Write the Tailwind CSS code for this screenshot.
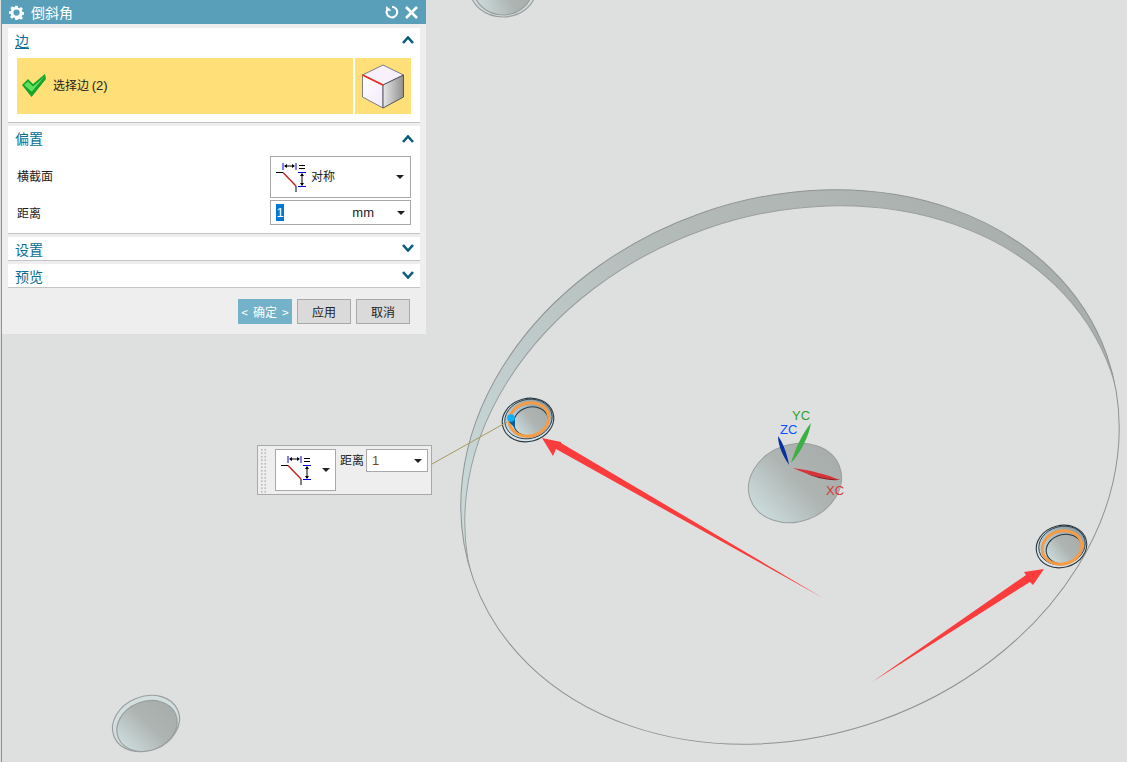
<!DOCTYPE html>
<html lang="zh">
<head>
    <meta charset="UTF-8">
    <title>倒斜角</title>
    <script src="https://cdn.jsdelivr.net/npm/@tailwindcss/browser@4"></script>
</head>
<body class="m-0 overflow-hidden">
<div class="relative w-[1127px] h-[762px] bg-[#dee0df] overflow-hidden font-['Noto_Sans_CJK_SC','Liberation_Sans',sans-serif]">

    <!-- graphics window -->
    <svg class="absolute inset-0" width="1127" height="762" viewBox="0 0 1127 762">
        <defs>
            <linearGradient id="wall" gradientUnits="userSpaceOnUse" x1="461" y1="500" x2="1118" y2="300">
                <stop offset="0" stop-color="#cbdcdc"/>
                <stop offset="0.5" stop-color="#b4bcba"/>
                <stop offset="1" stop-color="#a8aeac"/>
            </linearGradient>
            <linearGradient id="hole" x1="0" y1="0.7" x2="1" y2="0.35">
                <stop offset="0" stop-color="#cddddd"/>
                <stop offset="0.55" stop-color="#adb4b2"/>
                <stop offset="1" stop-color="#a8adab"/>
            </linearGradient>
            <linearGradient id="ring" x1="0" y1="0.9" x2="1" y2="0.1">
                <stop offset="0" stop-color="#c9e2ee"/>
                <stop offset="0.6" stop-color="#a9bfca"/>
                <stop offset="1" stop-color="#7f8f98"/>
            </linearGradient>
            <clipPath id="outerClip">
                <ellipse cx="790" cy="467" rx="336" ry="269" transform="rotate(-19.5 790 467)"/>
            </clipPath>
        </defs>

        <!-- big cutout -->
        <ellipse cx="790" cy="467" rx="336" ry="269" transform="rotate(-19.5 790 467)" fill="url(#wall)"/>
        <g clip-path="url(#outerClip)">
            <ellipse cx="794" cy="483" rx="336" ry="269" transform="rotate(-19.5 794 483)" fill="#dee0df" stroke="#9a9e9e" stroke-width="1"/>
        </g>
        <ellipse cx="790" cy="467" rx="336" ry="269" transform="rotate(-19.5 790 467)" fill="none" stroke="#8f9393" stroke-width="1"/>

        <!-- top hole -->
        <ellipse cx="503" cy="-11" rx="33" ry="28" fill="#d2dfde" stroke="#9a9e9e" stroke-width="1.2"/>
        <ellipse cx="503" cy="-13" rx="30" ry="28" fill="url(#hole)" stroke="#9a9e9e" stroke-width="1.2"/>

        <!-- bottom left hole -->
        <ellipse cx="146" cy="723.5" rx="34.5" ry="27" transform="rotate(-22 146 723.5)" fill="#d2dfde" stroke="#9a9e9e" stroke-width="1.2"/>
        <ellipse cx="147" cy="726" rx="31" ry="24.5" transform="rotate(-22 147 726)" fill="url(#hole)" stroke="#9a9e9e" stroke-width="1.2"/>

        <!-- centre hole -->
        <ellipse cx="795" cy="483" rx="47.5" ry="38.5" transform="rotate(-20 795 483)" fill="url(#hole)" stroke="#9a9e9e" stroke-width="1"/>

        <!-- selected hole, left -->
        <ellipse cx="528" cy="420" rx="26" ry="21.5" transform="rotate(-15 528 420)" fill="#d9e5ea" stroke="#2d3a42" stroke-width="1.1"/>
        <ellipse cx="528.5" cy="419" rx="24" ry="19.5" transform="rotate(-15 528.5 419)" fill="url(#ring)" stroke="#2d3a42" stroke-width="0.9"/>
        <ellipse cx="531" cy="421.5" rx="17.5" ry="14.5" transform="rotate(-15 531 421.5)" fill="url(#hole)" stroke="#2d3a42" stroke-width="1.1"/>
        <ellipse cx="529" cy="419.5" rx="20" ry="16.5" transform="rotate(-15 529 419.5)" fill="none" stroke="#f59c45" stroke-width="3"/>

        <!-- selected hole, right -->
        <ellipse cx="1061.5" cy="546.5" rx="25.5" ry="21" transform="rotate(-15 1061.5 546.5)" fill="#d9e5ea" stroke="#2d3a42" stroke-width="1.1"/>
        <ellipse cx="1062" cy="545.5" rx="23.5" ry="19" transform="rotate(-15 1062 545.5)" fill="url(#ring)" stroke="#2d3a42" stroke-width="0.9"/>
        <ellipse cx="1064" cy="549" rx="18" ry="14.5" transform="rotate(-15 1064 549)" fill="url(#hole)" stroke="#2d3a42" stroke-width="1.1"/>
        <ellipse cx="1062" cy="547.5" rx="20" ry="16.5" transform="rotate(-15 1062 547.5)" fill="none" stroke="#f59c45" stroke-width="3"/>

        <!-- leader + handle -->
        <line x1="432" y1="464" x2="507" y2="422" stroke="#a89a5a" stroke-width="1"/>
        <polygon points="509,422 515,418 515,428" fill="#0b5e96"/>
        <circle cx="511" cy="418" r="3.8" fill="#0fb0f5"/>

        <!-- csys -->
        <path d="M778 436 C783 443 787 453 789 465 C784 457 778 447 778 436Z" fill="#0a2f9e"/>
        <path d="M811 423 C809 436 801 452 791 463 C795 449 802 434 811 423Z" fill="#3cb043"/>
        <path d="M793 468 C810 470 828 475 840 480 C826 480 806 474 793 468Z" fill="#d8333a"/>
        <path d="M805 473 C818 477 830 479 840 480 C826 481 814 477 805 473Z" fill="#8e1d22"/>
        <text x="792" y="420" font-size="13" fill="#2da02d" class="font-['Liberation_Sans']">YC</text>
        <text x="780" y="434" font-size="13" fill="#0a50ff" class="font-['Liberation_Sans']">ZC</text>
        <text x="826" y="495" font-size="13" fill="#d83a3a" class="font-['Liberation_Sans']">XC</text>

        <!-- annotation arrows -->
        <polygon points="542,438 561,442 561,443 823,598 556,449 553,456" fill="#fb3c3c"/>
        <polygon points="1044,569 1024,572 1026,575 872,682 1030,582 1033,585" fill="#fb3c3c"/>

        <symbol id="chamfer" viewBox="0 0 30 30">
            <path d="M0 10.5H7M20 24V30" fill="none" stroke="#000"/>
            <path d="M7 1V8M20 1V8M22 10.5H30M22 24.5H30" fill="none" stroke="#0000e0" stroke-width="1"/>
            <path d="M7 10.5L20 24" fill="none" stroke="#c8201c" stroke-width="1.4"/>
            <path d="M9 4H18M26 12V23" fill="none" stroke="#000"/>
            <path d="M8 4L11 2V6ZM19 4L16 2V6ZM26 11L24 14H28ZM26 24L24 21H28Z" fill="#000"/>
            <path d="M23 3.5H29M23 6.5H29" fill="none" stroke="#000"/>
        </symbol>
    </svg>

    <!-- left edge of the window -->
    <div class="absolute left-[1px] top-0 w-[1px] h-[762px] bg-[#8f9191]"></div>

    <!-- chamfer dialog -->
    <div class="absolute left-[2px] top-0 w-[424px] h-[334px] bg-[#eeeeee] flex flex-col">
        <div class="h-[24px] bg-[#5a9fb9] flex items-center pl-[7px] pr-[8px] text-white shrink-0">
            <svg width="15" height="15" viewBox="0 0 24 24" fill="#fff">
                <path fill-rule="evenodd" d="M10 1h4l.6 3.2 2 .8L19.4 3.2l2.8 2.8-1.8 2.800.8 2 3.2.6v4l-3.2.6-.8 2 1.800 2.800-2.800 2.800-2.800-1.800-2 .8L14 24h-4l-.6-3.200-2-.8-2.800 1.800-2.800-2.800 1.800-2.800-.8-2L0 14v-4l3.200-.6.8-2L2.200 4.600 5 1.800l2.800 1.800 2-.8zM12 7a5 5 0 1 0 0 10 5 5 0 0 0 0-10z"/>
            </svg>
            <span class="ml-[7px] text-[14px] leading-none">倒斜角</span>
            <svg class="ml-auto" width="14" height="14" viewBox="0 0 14 14" fill="none" stroke="#fff" stroke-width="2">
                <path d="M3 3.5A5.3 5.300 0 1 0 7 1.800"/>
                <path d="M1 1L1.500 6L6.500 5.500Z" fill="#fff" stroke="none"/>
            </svg>
            <svg class="ml-[6px]" width="13" height="13" viewBox="0 0 13 13" stroke="#fff" stroke-width="2.6"><path d="M1 1L12 12M12 1L1 12"/></svg>
        </div>

        <div class="flex flex-col gap-[3px] mx-[6px] mt-[4px]">
            <!-- 边 -->
            <section class="h-[95px] bg-white border-b border-[#c4c4c4]">
                <div class="h-[26px] mb-[4px] flex items-center justify-between pl-[7px] pr-[6px]">
                    <span class="-mt-[3px] text-[14px] leading-none text-[#0a6d92] underline underline-offset-2">边</span>
                    <svg class="-mt-[2px]" width="12" height="8" viewBox="0 0 12 8" fill="none" stroke="#0b5c7c" stroke-width="2.6"><path d="M1 7L6 1.500L11 7"/></svg>
                </div>
                <div class="flex gap-[2px] ml-[9px]">
                    <div class="w-[336px] h-[56px] bg-[#fedf78] flex items-center pl-[5px]">
                        <svg width="25" height="24" viewBox="0 0 25 24">
                            <path d="M0 11L6 5L11 10L23 0L24 5L9.500 23Z" fill="#16a52a"/>
                            <path d="M2 11L6 7.500L11 12.500L22.500 2.500L10 17.500L9 17Z" fill="#5fe05f"/>
                        </svg>
                        <span class="ml-[6px] -mt-[2px] text-[12px] leading-none text-[#222]">选择边 <span class="font-['Liberation_Sans'] text-[13px]">(2)</span></span>
                    </div>
                    <div class="w-[56px] h-[56px] bg-[#fedf78] flex items-center justify-center">
                        <svg width="43" height="45" viewBox="0 0 43 45">
                            <defs>
                                <linearGradient id="cl" x1="0" y1="0" x2="1" y2="1"><stop offset="0" stop-color="#fff"/><stop offset="1" stop-color="#f3e9fb"/></linearGradient>
                                <linearGradient id="cr" x1="0" y1="0" x2="1" y2="0"><stop offset="0" stop-color="#e8e8e8"/><stop offset="1" stop-color="#8f8f8f"/></linearGradient>
                            </defs>
                            <path d="M21 1L41.500 11L21 21L0.500 11Z" fill="#f8f0fb" stroke="#7d7d85"/>
                            <path d="M0.500 11L21 21V44L0.500 33Z" fill="url(#cl)" stroke="#7d7d85"/>
                            <path d="M21 21L41.500 11V33L21 44Z" fill="url(#cr)" stroke="#55555c"/>
                            <path d="M0.500 11L21 21" stroke="#e8321c" stroke-width="1.800"/>
                        </svg>
                    </div>
                </div>
            </section>

            <!-- 偏置 -->
            <section class="h-[108px] bg-white border-b border-[#c4c4c4]">
                <div class="h-[26px] mb-[4px] flex items-center justify-between pl-[7px] pr-[6px]">
                    <span class="-mt-[2px] text-[14px] leading-none text-[#0a6d92]">偏置</span>
                    <svg class="-mt-[1px]" width="12" height="8" viewBox="0 0 12 8" fill="none" stroke="#0b5c7c" stroke-width="2.6"><path d="M1 7L6 1.500L11 7"/></svg>
                </div>
                <div class="flex items-center h-[42px]">
                    <span class="-mt-[2px] w-[262px] pl-[9px] text-[12px] text-[#222] leading-none">横截面</span>
                    <div class="w-[141px] h-[42px] border border-[#a9a9a9] flex items-center pl-[5px] pr-[6px]">
                        <svg width="30" height="30"><use href="#chamfer"/></svg>
                        <span class="ml-[5px] -mt-[2px] text-[12px] leading-none text-[#222]">对称</span>
                        <span class="ml-auto w-0 h-0 border-x-[4px] border-x-transparent border-t-[4px] border-t-[#222]"></span>
                    </div>
                </div>
                <div class="flex items-center h-[25px] mt-[2px]">
                    <span class="w-[262px] pl-[9px] text-[12px] text-[#222] leading-none">距离</span>
                    <div class="w-[141px] h-[25px] border border-[#a9a9a9] flex items-center pl-[5px] pr-[5px] font-['Liberation_Sans']">
                        <span class="w-[8px] h-[17px] bg-[#0078d7] text-white text-[13px] leading-[17px] text-center">1</span>
                        <span class="ml-auto text-[13px] leading-none text-[#222]">mm</span>
                        <span class="ml-[23px] w-0 h-0 border-x-[4px] border-x-transparent border-t-[4px] border-t-[#222]"></span>
                    </div>
                </div>
            </section>

            <!-- 设置 -->
            <section class="h-[24px] bg-white border-b border-[#c4c4c4] pl-[7px] pr-[6px] flex items-center justify-between">
                <span class="text-[14px] leading-none text-[#0a6d92]">设置</span>
                <svg class="-mt-[2px]" width="12" height="8" viewBox="0 0 12 8" fill="none" stroke="#0b5c7c" stroke-width="2.6"><path d="M1 1L6 6.500L11 1"/></svg>
            </section>

            <!-- 预览 -->
            <section class="h-[24px] bg-white border-b border-[#c4c4c4] pl-[7px] pr-[6px] flex items-center justify-between">
                <span class="text-[14px] leading-none text-[#0a6d92]">预览</span>
                <svg class="-mt-[2px]" width="12" height="8" viewBox="0 0 12 8" fill="none" stroke="#0b5c7c" stroke-width="2.6"><path d="M1 1L6 6.500L11 1"/></svg>
            </section>
        </div>

        <div class="flex justify-end gap-[5px] mt-[11px] pr-[16px]">
            <button class="w-[54px] h-[25px] bg-[#73b2c8] text-white text-[12px] leading-none flex items-center justify-center gap-[5px]"><span>&lt;</span><span>确定</span><span>&gt;</span></button>
            <button class="w-[54px] h-[25px] bg-[#dadada] border border-[#a9a9a9] text-[#222] text-[12px] leading-none">应用</button>
            <button class="w-[54px] h-[25px] bg-[#dadada] border border-[#a9a9a9] text-[#222] text-[12px] leading-none">取消</button>
        </div>
    </div>

    <!-- on-screen input bar -->
    <div class="absolute left-[257px] top-[445px] w-[175px] h-[50px] bg-[#eeeeee] border border-[#a9a9a9] flex items-start pt-[3px]">
        <div class="ml-[2px] mt-[-1px] w-[7px] h-[45px] bg-[radial-gradient(circle,#bdbdbd_1.2px,transparent_1.3px)] bg-[length:3.5px_3.5px]"></div>
        <div class="ml-[8px] w-[61px] h-[42px] bg-white border border-[#a9a9a9] flex items-center pl-[5px] pr-[5px]">
            <svg width="30" height="30"><use href="#chamfer"/></svg>
            <span class="ml-auto w-0 h-0 border-x-[4px] border-x-transparent border-t-[4px] border-t-[#222]"></span>
        </div>
        <span class="ml-[4px] mt-[5px] text-[12px] leading-none text-[#222]">距离</span>
        <div class="ml-[2px] w-[62px] h-[23px] bg-white border border-[#a9a9a9] flex items-center pl-[5px] pr-[5px] font-['Liberation_Sans']">
            <span class="text-[13px] leading-none text-[#7a4a10]">1</span>
            <span class="ml-auto w-0 h-0 border-x-[4px] border-x-transparent border-t-[4px] border-t-[#222]"></span>
        </div>
    </div>
</div>
</body>
</html>
